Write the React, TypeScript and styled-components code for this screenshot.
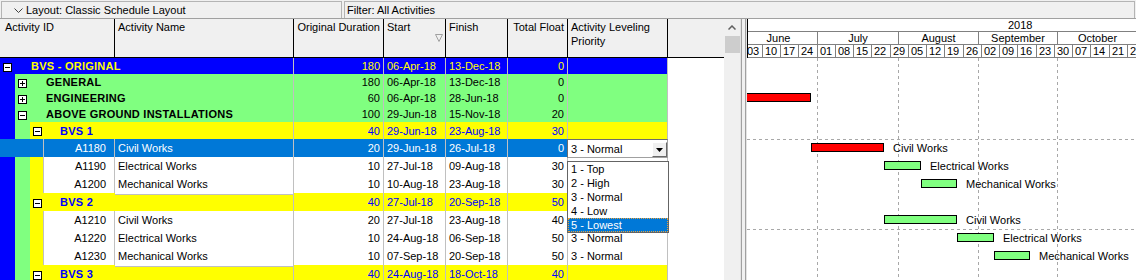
import React from 'react';
import styled, { createGlobalStyle } from 'styled-components';

const FONT = `"Liberation Sans", Arial, Helvetica, sans-serif`;
const GRID = '#c0c0c0';
const SEL = '#0078d7';
const LEVEL_BG = ['#0000ff', '#80ff80', '#ffff00'];
const LEVEL_FG = ['#ffff00', '#000000', '#0000ff'];
const BAND_W = [15, 15, 14];
const ACT_BAND_W = [15, 15, 13];
const COLS = '115px 179px 90px 62px 62px 60px 100px 56px';

const GlobalStyle = createGlobalStyle`
  html, body { margin: 0; padding: 0; background: #ffffff; }
  body { font-family: ${FONT}; font-size: 11px; color: #000; }
  #root { width: 1136px; height: 280px; overflow: hidden; }
  *, *::before, *::after { box-sizing: border-box; }
`;

const Window = styled.div`
  width: 1136px;
  height: 280px;
  overflow: hidden;
  display: flex;
  flex-direction: column;
  background: #fff;
`;

const TopBar = styled.div`
  flex: 0 0 19px;
  display: flex;
  gap: 2px;
  padding: 1px 1px 0 1px;
  background: #f0f0f0;
  border-bottom: 1px solid #a0a0a0;
`;

const BarPanel = styled.div<{ $width?: number }>`
  ${(p) => (p.$width ? `flex: 0 0 ${p.$width}px;` : 'flex: 1 1 auto;')}
  display: flex;
  align-items: center;
  gap: 3px;
  padding-left: ${(p) => (p.$width ? 12 : 2)}px;
  border: 1px solid #b4b4b4;
  border-bottom: none;
  line-height: 15px;
  white-space: nowrap;
  color: #000;
`;

const Main = styled.div`
  flex: 1 1 auto;
  display: flex;
  min-height: 0;
`;

const TablePane = styled.div`
  flex: 0 0 724px;
  display: flex;
  flex-direction: column;
  overflow: hidden;
  background: #fff;
`;

const HeaderRow = styled.div`
  flex: 0 0 39px;
  display: grid;
  grid-template-columns: ${COLS};
  background: #f0f0f0;
  border-bottom: 1px solid #000;
`;

const HeaderCell = styled.div<{ $align?: 'left' | 'right'; $last?: boolean; $wrap?: boolean; $pl?: number }>`
  position: relative;
  padding: 1px 3px 0 ${(p) => p.$pl ?? 3}px;
  line-height: 14px;
  text-align: ${(p) => p.$align ?? 'left'};
  white-space: ${(p) => (p.$wrap ? 'normal' : 'nowrap')};
  border-right: ${(p) => (p.$last ? 'none' : '1px solid #000')};
`;

const SortMark = styled.svg`
  position: absolute;
  right: 2px;
  top: 15px;
`;

const DataRow = styled.div<{ $h: number }>`
  flex: 0 0 ${(p) => p.$h}px;
  display: grid;
  grid-template-columns: ${COLS};
  height: ${(p) => p.$h}px;
  line-height: ${(p) => p.$h + 1}px;
`;

const Cell = styled.div<{ $bg: string; $fg: string; $line: string; $align?: 'left' | 'right' }>`
  position: relative;
  padding: 0 3px;
  background: ${(p) => p.$bg};
  color: ${(p) => p.$fg};
  text-align: ${(p) => p.$align ?? 'left'};
  border-right: 1px solid ${GRID};
  border-bottom: 1px solid ${(p) => p.$line};
  white-space: nowrap;
`;

const Filler = styled.div`
  background: #fff;
`;

const TreeCell = styled.div<{ $span: number }>`
  grid-column: span ${(p) => p.$span};
  display: flex;
  min-width: 0;
  border-right: 1px solid ${GRID};
`;

const Band = styled.div<{ $bg: string; $w: number }>`
  flex: 0 0 ${(p) => p.$w}px;
  background: ${(p) => p.$bg};
  display: flex;
  align-items: center;
  justify-content: center;
`;

const WbsLabel = styled.div<{ $bg: string; $fg: string; $line: string }>`
  flex: 1 1 auto;
  min-width: 0;
  padding-left: 16px;
  background: ${(p) => p.$bg};
  color: ${(p) => p.$fg};
  font-weight: bold;
  font-size: 11px;
  letter-spacing: 0.25px;
  border-bottom: 1px solid ${(p) => p.$line};
  white-space: nowrap;
`;

const ActId = styled.div<{ $bg: string; $fg: string }>`
  flex: 1 1 auto;
  padding-right: 8px;
  text-align: right;
  background: ${(p) => p.$bg};
  color: ${(p) => p.$fg};
  border-left: 1px solid ${GRID};
  border-bottom: 1px solid ${GRID};
  white-space: nowrap;
`;

const Combo = styled.div`
  position: absolute;
  left: -1px;
  top: 0;
  width: 101px;
  height: 19px;
  padding-left: 3px;
  line-height: 18px;
  background: #fff;
  color: #000;
  border: 1px solid #a0a0a0;
  border-top-color: #6d6d6d;
  border-left-color: #6d6d6d;
  z-index: 2;
`;

const ComboButton = styled.div`
  position: absolute;
  right: 0;
  top: 2px;
  width: 15px;
  height: 15px;
  display: flex;
  align-items: center;
  justify-content: center;
  background: #f0f0f0;
  border: 1px solid;
  border-color: #ffffff #696969 #696969 #ffffff;
`;

const DropList = styled.div`
  position: absolute;
  left: -1px;
  top: 22px;
  width: 102px;
  background: #fff;
  color: #000;
  border: 1px solid #646464;
  z-index: 3;
`;

const DropItem = styled.div<{ $active?: boolean }>`
  height: 14px;
  line-height: 14px;
  padding-left: 3px;
  background: ${(p) => (p.$active ? SEL : '#fff')};
  color: ${(p) => (p.$active ? '#fff' : '#000')};
  outline: ${(p) => (p.$active ? '1px dotted #e9a13b' : 'none')};
  outline-offset: -1px;
`;

const ScrollTrack = styled.div`
  flex: 0 0 16px;
  display: flex;
  flex-direction: column;
  background: #f0f0f0;
`;

const ScrollButton = styled.div`
  flex: 0 0 17px;
  display: flex;
  align-items: center;
  justify-content: center;
`;

const ScrollThumb = styled.div`
  flex: 0 0 17px;
  margin-left: 1px;
  background: #cdcdcd;
`;

const Splitter = styled.div`
  flex: 0 0 7px;
  background: linear-gradient(
    to right,
    #e3e3e3 0 1px,
    #a0a0a0 1px 2px,
    #f0f0f0 2px 5px,
    #a0a0a0 5px 6px,
    #e3e3e3 6px 7px
  );
`;

const GanttPane = styled.div`
  flex: 1 1 auto;
  min-width: 0;
  display: flex;
  flex-direction: column;
  overflow: hidden;
`;

const Timescale = styled.div`
  position: relative;
  flex: 0 0 39px;
  display: flex;
  flex-direction: column;
  background: #fff;
  &::before {
    content: '';
    position: absolute;
    left: 0;
    top: 0;
    bottom: 0;
    width: 1px;
    background: #000;
    z-index: 2;
  }
`;

const ScaleTier = styled.div`
  position: relative;
  flex: 0 0 13px;
  border-bottom: 1px solid #808080;
  overflow: hidden;
  line-height: 13px;
`;

const YearLabel = styled.div`
  position: absolute;
  left: 261px;
  top: 0;
`;

const TierCell = styled.div<{ $center?: boolean }>`
  position: absolute;
  top: 0;
  bottom: 0;
  border-left: 1px solid #808080;
  padding-left: ${(p) => (p.$center ? 0 : 2)}px;
  text-align: ${(p) => (p.$center ? 'center' : 'left')};
  white-space: nowrap;
  overflow: hidden;
`;

const GanttBody = styled.div`
  position: relative;
  flex: 1 1 auto;
  background: #fff;
  overflow: hidden;
`;

const GridSvg = styled.svg`
  position: absolute;
  left: 0;
  top: 0;
`;

const TaskBar = styled.div<{ $fill: string }>`
  position: absolute;
  height: 9px;
  background: ${(p) => p.$fill};
  border: 1px solid #000;
`;

const TaskLabel = styled.div`
  position: absolute;
  line-height: 13px;
  white-space: nowrap;
  color: #000;
`;

/* ---------- data ---------- */

type WbsRow = {
  kind: 'wbs';
  level: 0 | 1 | 2;
  name: string;
  open: boolean;
  dur: string;
  start: string;
  finish: string;
  tf: string;
  h: number;
};
type ActRow = {
  kind: 'act';
  id: string;
  name: string;
  dur: string;
  start: string;
  finish: string;
  tf: string;
  alp?: string;
  selected?: boolean;
  h: number;
};
type Row = WbsRow | ActRow;

const rows: Row[] = [
  { kind: 'wbs', level: 0, name: 'BVS - ORIGINAL', open: true, dur: '180', start: '06-Apr-18', finish: '13-Dec-18', tf: '0', h: 16 },
  { kind: 'wbs', level: 1, name: 'GENERAL', open: false, dur: '180', start: '06-Apr-18', finish: '13-Dec-18', tf: '0', h: 16 },
  { kind: 'wbs', level: 1, name: 'ENGINEERING', open: false, dur: '60', start: '06-Apr-18', finish: '28-Jun-18', tf: '0', h: 16 },
  { kind: 'wbs', level: 1, name: 'ABOVE GROUND INSTALLATIONS', open: true, dur: '100', start: '29-Jun-18', finish: '15-Nov-18', tf: '20', h: 16 },
  { kind: 'wbs', level: 2, name: 'BVS 1', open: true, dur: '40', start: '29-Jun-18', finish: '23-Aug-18', tf: '30', h: 17 },
  { kind: 'act', id: 'A1180', name: 'Civil Works', dur: '20', start: '29-Jun-18', finish: '26-Jul-18', tf: '0', selected: true, h: 18 },
  { kind: 'act', id: 'A1190', name: 'Electrical Works', dur: '10', start: '27-Jul-18', finish: '09-Aug-18', tf: '30', h: 18 },
  { kind: 'act', id: 'A1200', name: 'Mechanical Works', dur: '10', start: '10-Aug-18', finish: '23-Aug-18', tf: '30', h: 18 },
  { kind: 'wbs', level: 2, name: 'BVS 2', open: true, dur: '40', start: '27-Jul-18', finish: '20-Sep-18', tf: '50', h: 18 },
  { kind: 'act', id: 'A1210', name: 'Civil Works', dur: '20', start: '27-Jul-18', finish: '23-Aug-18', tf: '40', h: 18 },
  { kind: 'act', id: 'A1220', name: 'Electrical Works', dur: '10', start: '24-Aug-18', finish: '06-Sep-18', tf: '50', alp: '3 - Normal', h: 18 },
  { kind: 'act', id: 'A1230', name: 'Mechanical Works', dur: '10', start: '07-Sep-18', finish: '20-Sep-18', tf: '50', alp: '3 - Normal', h: 18 },
  { kind: 'wbs', level: 2, name: 'BVS 3', open: true, dur: '40', start: '24-Aug-18', finish: '18-Oct-18', tf: '40', h: 18 },
];

const rowTops: number[] = [];
rows.reduce((acc, r) => {
  rowTops.push(acc);
  return acc + r.h;
}, 0);

// timescale: day 0 = 1 June 2018
const PX = 2.607;
const ORIGIN = -8.5;
const dayX = (d: number) => Math.round(ORIGIN + d * PX);

const months = [
  { name: 'June', s: 0, e: 30 },
  { name: 'July', s: 30, e: 61 },
  { name: 'August', s: 61, e: 92 },
  { name: 'September', s: 92, e: 122 },
  { name: 'October', s: 122, e: 153 },
];

const weeks: { d: number; label: string }[] = [];
for (let d = 2; d < 153; d += 7) {
  const m = months.find((mm) => d >= mm.s && d < mm.e)!;
  const dom = d - m.s + 1;
  weeks.push({ d, label: String(dom).padStart(2, '0') });
}

const bars = [
  { row: 2, s: -56, e: 28, fill: '#ff0000' },
  { row: 5, s: 28, e: 56, fill: '#ff0000', label: 'Civil Works' },
  { row: 6, s: 56, e: 70, fill: '#80ff80', label: 'Electrical Works' },
  { row: 7, s: 70, e: 84, fill: '#80ff80', label: 'Mechanical Works' },
  { row: 9, s: 56, e: 84, fill: '#80ff80', label: 'Civil Works' },
  { row: 10, s: 84, e: 98, fill: '#80ff80', label: 'Electrical Works' },
  { row: 11, s: 98, e: 112, fill: '#80ff80', label: 'Mechanical Works' },
];

const priorities = ['1 - Top', '2 - High', '3 - Normal', '4 - Low', '5 - Lowest'];

/* ---------- icons ---------- */

const Chevron = () => (
  <svg width="9" height="5" viewBox="0 0 9 5">
    <polyline points="0.5,0.5 4.5,4.5 8.5,0.5" fill="none" stroke="#404040" strokeWidth="1" />
  </svg>
);

const ExpandBox = ({ open }: { open: boolean }) => (
  <svg width="9" height="9" viewBox="0 0 9 9">
    <rect x="0.5" y="0.5" width="8" height="8" fill="#fff" stroke="#000" />
    <line x1="2" y1="4.5" x2="7" y2="4.5" stroke="#000" />
    {!open && <line x1="4.5" y1="2" x2="4.5" y2="7" stroke="#000" />}
  </svg>
);

const DownTriangle = () => (
  <svg width="7" height="4" viewBox="0 0 7 4">
    <polygon points="0,0 7,0 3.5,4" fill="#000" />
  </svg>
);

const UpChevron = () => (
  <svg width="8" height="5" viewBox="0 0 8 5">
    <polyline points="0.5,4.5 4,1 7.5,4.5" fill="none" stroke="#606060" strokeWidth="1.5" />
  </svg>
);

/* ---------- rows ---------- */

function WbsLine({ r }: { r: WbsRow }) {
  const bg = LEVEL_BG[r.level];
  const fg = LEVEL_FG[r.level];
  const line = r.level === 0 ? bg : GRID;
  return (
    <DataRow $h={r.h}>
      <TreeCell $span={2}>
        {Array.from({ length: r.level }, (_, l) => (
          <Band key={l} $bg={LEVEL_BG[l]} $w={BAND_W[l]} />
        ))}
        <Band $bg={bg} $w={BAND_W[r.level]}>
          <ExpandBox open={r.open} />
        </Band>
        <WbsLabel $bg={bg} $fg={fg} $line={line}>
          {r.name}
        </WbsLabel>
      </TreeCell>
      <Cell $bg={bg} $fg={fg} $line={line} $align="right">{r.dur}</Cell>
      <Cell $bg={bg} $fg={fg} $line={line}>{r.start}</Cell>
      <Cell $bg={bg} $fg={fg} $line={line}>{r.finish}</Cell>
      <Cell $bg={bg} $fg={fg} $line={line} $align="right">{r.tf}</Cell>
      <Cell $bg={bg} $fg={fg} $line={line} />
      <Filler />
    </DataRow>
  );
}

function ActLine({ r }: { r: ActRow }) {
  const bg = r.selected ? SEL : '#fff';
  const fg = r.selected ? '#fff' : '#000';
  return (
    <DataRow $h={r.h}>
      <TreeCell $span={1}>
        {ACT_BAND_W.map((w, l) => (
          <Band key={l} $bg={r.selected ? SEL : LEVEL_BG[l]} $w={w} />
        ))}
        <ActId $bg={bg} $fg={fg}>{r.id}</ActId>
      </TreeCell>
      <Cell $bg={bg} $fg={fg} $line={GRID}>{r.name}</Cell>
      <Cell $bg={bg} $fg={fg} $line={GRID} $align="right">{r.dur}</Cell>
      <Cell $bg={bg} $fg={fg} $line={GRID}>{r.start}</Cell>
      <Cell $bg={bg} $fg={fg} $line={GRID}>{r.finish}</Cell>
      <Cell $bg={bg} $fg={fg} $line={GRID} $align="right">{r.tf}</Cell>
      <Cell $bg="#fff" $fg="#000" $line={GRID}>
        {r.selected ? (
          <>
            <Combo>
              3 - Normal
              <ComboButton>
                <DownTriangle />
              </ComboButton>
            </Combo>
            <DropList>
              {priorities.map((p) => (
                <DropItem key={p} $active={p === '5 - Lowest'}>
                  {p}
                </DropItem>
              ))}
            </DropList>
          </>
        ) : (
          r.alp
        )}
      </Cell>
      <Filler />
    </DataRow>
  );
}

export default function App() {
  const bodyW = 389;
  const bodyH = 222;
  const gridX = [30, 61, 92, 122].map((d) => dayX(d) + 0.5);
  const gridY = [rowTops[5] + 0.5, rowTops[10] + 0.5];

  return (
    <>
      <GlobalStyle />
      <Window>
        <TopBar>
          <BarPanel $width={341}>
            <Chevron />
            Layout: Classic Schedule Layout
          </BarPanel>
          <BarPanel>Filter: All Activities</BarPanel>
        </TopBar>
        <Main>
          <TablePane>
            <HeaderRow>
              <HeaderCell $pl={5}>Activity ID</HeaderCell>
              <HeaderCell>Activity Name</HeaderCell>
              <HeaderCell $align="right">Original Duration</HeaderCell>
              <HeaderCell>
                Start
                <SortMark width="8" height="8" viewBox="0 0 8 8">
                  <polygon points="0.5,0.5 7.5,0.5 4,7.5" fill="none" stroke="#a0a0a0" />
                </SortMark>
              </HeaderCell>
              <HeaderCell>Finish</HeaderCell>
              <HeaderCell $align="right">Total Float</HeaderCell>
              <HeaderCell $wrap>Activity Leveling Priority</HeaderCell>
              <HeaderCell $last />
            </HeaderRow>
            {rows.map((r, i) =>
              r.kind === 'wbs' ? <WbsLine key={i} r={r} /> : <ActLine key={i} r={r} />
            )}
          </TablePane>
          <ScrollTrack>
            <ScrollButton>
              <UpChevron />
            </ScrollButton>
            <ScrollThumb />
          </ScrollTrack>
          <Splitter />
          <GanttPane>
            <Timescale>
              <ScaleTier>
                <YearLabel>2018</YearLabel>
              </ScaleTier>
              <ScaleTier>
                {months.map((m) => (
                  <TierCell
                    key={m.name}
                    $center
                    style={{ left: dayX(m.s), width: dayX(m.e) - dayX(m.s) }}
                  >
                    {m.name}
                  </TierCell>
                ))}
              </ScaleTier>
              <ScaleTier>
                {weeks.map((w) => (
                  <TierCell key={w.d} style={{ left: dayX(w.d), width: dayX(w.d + 7) - dayX(w.d) }}>
                    {w.label}
                  </TierCell>
                ))}
              </ScaleTier>
            </Timescale>
            <GanttBody>
              <GridSvg width={bodyW} height={bodyH} viewBox={`0 0 ${bodyW} ${bodyH}`}>
                {gridX.map((x) => (
                  <line key={x} x1={x} y1={0} x2={x} y2={bodyH} stroke="#a8a8a8" strokeDasharray="3 3" />
                ))}
                {gridY.map((y) => (
                  <line key={y} x1={0} y1={y} x2={bodyW} y2={y} stroke="#a8a8a8" strokeDasharray="3 3" />
                ))}
              </GridSvg>
              {bars.map((b, i) => {
                const h = rows[b.row].h;
                const top = rowTops[b.row] + Math.floor((h - 9) / 2);
                const left = dayX(b.s);
                const right = dayX(b.e);
                return (
                  <React.Fragment key={i}>
                    <TaskBar $fill={b.fill} style={{ left, top, width: right - left }} />
                    {b.label && <TaskLabel style={{ left: right + 9, top: top - 1 }}>{b.label}</TaskLabel>}
                  </React.Fragment>
                );
              })}
            </GanttBody>
          </GanttPane>
        </Main>
      </Window>
    </>
  );
}
